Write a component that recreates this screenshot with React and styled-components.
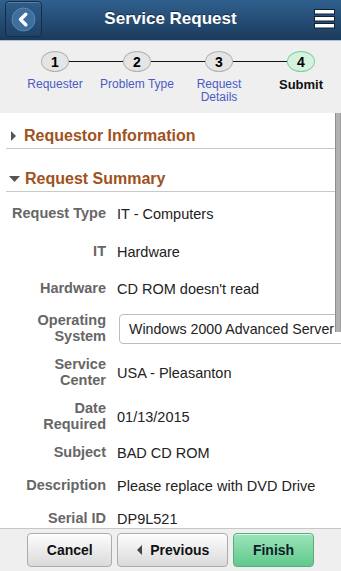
import React from 'react';
import styled, { createGlobalStyle } from 'styled-components';

const Global = createGlobalStyle`
  html, body { margin: 0; padding: 0; background: #fff; }
  body { font-family: "Liberation Sans", Arial, sans-serif; }
  * { box-sizing: border-box; }
`;

const Page = styled.div`
  width: 341px;
  height: 571px;
  display: flex;
  flex-direction: column;
  overflow: hidden;
`;

const Header = styled.header`
  flex: none;
  height: 41px;
  background: linear-gradient(#30608e, #1b3a5c);
  border-bottom: 1px solid #a7c2da;
  display: grid;
  grid-template-columns: 48px 1fr 48px;
  align-items: center;
`;

const BackButton = styled.button`
  align-self: start;
  margin: 1px 0 0 5px;
  width: 37px;
  height: 36px;
  padding: 0;
  border: 1px solid #142d48;
  border-radius: 4px;
  background: linear-gradient(#2f5c89, #1f4267);
  box-shadow: inset 0 1px 0 rgba(255, 255, 255, 0.22);
  display: flex;
  align-items: center;
  justify-content: center;
`;

const Title = styled.h1`
  margin: 0 0 2px;
  text-align: center;
  color: #fff;
  font-size: 17px;
  font-weight: bold;
  text-shadow: 0 -1px 0 rgba(0, 0, 0, 0.45);
`;

const MenuButton = styled.div`
  justify-self: end;
  margin: 0 5px 2px 0;
  display: flex;
`;

const Stepper = styled.nav`
  flex: none;
  height: 72px;
  background: #efefef;
  padding: 10px 0 0 14px;
  display: grid;
  grid-template-columns: repeat(4, 82px);
  align-items: start;
`;

const Step = styled.div`
  position: relative;
  display: flex;
  flex-direction: column;
  align-items: center;
  &:not(:last-child)::after {
    content: '';
    position: absolute;
    top: 10px;
    left: 50%;
    width: 82px;
    height: 1px;
    background: #111;
  }
`;

const Circle = styled.div`
  position: relative;
  z-index: 1;
  width: 28px;
  height: 21px;
  border-radius: 50%;
  border: 1px solid ${(p) => (p.$current ? '#7fcf9e' : '#b3b3b3')};
  background: ${(p) => (p.$current ? '#d6f2df' : '#e5e5e5')};
  display: flex;
  align-items: center;
  justify-content: center;
  font-size: 14px;
  font-weight: bold;
  color: #000;
`;

const StepLabel = styled.div`
  margin-top: 6px;
  text-align: center;
  line-height: 13px;
  font-size: ${(p) => (p.$current ? '13px' : '12px')};
  font-weight: ${(p) => (p.$current ? 'bold' : 'normal')};
  color: ${(p) => (p.$current ? '#111' : '#4a5bc4')};
`;

const Content = styled.main`
  flex: 1;
  position: relative;
  overflow: hidden;
  background: #fff;
`;

const ScrollThumb = styled.div`
  position: absolute;
  top: 0;
  right: 0;
  width: 6px;
  height: 219px;
  background: #b2b2b2;
  border-left: 1px solid #8f8f8f;
  border-right: 1px solid #a0a0a0;
`;

const SectionHeader = styled.h2`
  margin: ${(p) => p.$mt}px 0 0 6px;
  padding: ${(p) => p.$pt}px 0 3px;
  border-bottom: 1px solid #c9c9c9;
  display: flex;
  align-items: center;
  gap: ${(p) => p.$gap}px;
  color: #a0521c;
  font-size: 16px;
  line-height: 19px;
  font-weight: bold;
`;

const Caret = styled.svg`
  flex: none;
  margin-left: ${(p) => p.$ml}px;
  fill: #555;
`;

const Row = styled.div`
  margin-top: ${(p) => p.$mt}px;
  padding-left: 6px;
  display: grid;
  grid-template-columns: 100px minmax(0, 1fr);
  column-gap: 11px;
  align-items: center;
`;

const Label = styled.div`
  text-align: right;
  font-weight: bold;
  font-size: 14.5px;
  line-height: 15.5px;
  color: #666;
`;

const Value = styled.div`
  font-size: 14.5px;
  line-height: 16px;
  color: #222;
  white-space: nowrap;
`;

const SelectBox = styled.div`
  margin-left: 2px;
  width: 250px;
  height: 30px;
  border: 1px solid #bdbdbd;
  border-radius: 4px;
  background: #fff;
  padding-left: 9px;
  display: flex;
  align-items: center;
  font-size: 14.2px;
  color: #222;
  white-space: nowrap;
`;

const Footer = styled.footer`
  flex: none;
  height: 43px;
  border-top: 1px solid #c6c6c6;
  background: #efefef;
  padding-top: 4px;
  display: flex;
  justify-content: center;
  align-items: flex-start;
  gap: 5px;
`;

const Button = styled.button`
  height: 34px;
  padding: 0 ${(p) => p.$pr || 18.5}px 0 ${(p) => p.$pl || 18.5}px;
  border-radius: 4px;
  border: 1px solid ${(p) => (p.$primary ? '#55ae7c' : '#ababab')};
  background: ${(p) =>
    p.$primary
      ? 'linear-gradient(#9be5b9, #62c88c)'
      : 'linear-gradient(#fdfdfd, #dadada)'};
  box-shadow: inset 0 1px 0 rgba(255, 255, 255, 0.7);
  display: flex;
  align-items: center;
  gap: 8px;
  font-family: "Liberation Sans", Arial, sans-serif;
  font-size: 14px;
  font-weight: bold;
  color: ${(p) => (p.$primary ? '#0f1c2c' : '#111')};
`;

const steps = [
  { n: 1, label: 'Requester' },
  { n: 2, label: 'Problem Type' },
  { n: 3, label: 'Request Details' },
  { n: 4, label: 'Submit', current: true },
];

const rows = [
  { label: 'Request Type', value: 'IT - Computers', mt: 14 },
  { label: 'IT', value: 'Hardware', mt: 22 },
  { label: 'Hardware', value: "CD ROM doesn't read", mt: 21 },
  { label: ['Operating', 'System'], value: 'Windows 2000 Advanced Server', mt: 16, select: true },
  { label: ['Service', 'Center'], value: 'USA - Pleasanton', mt: 13 },
  { label: ['Date', 'Required'], value: '01/13/2015', mt: 13 },
  { label: 'Subject', value: 'BAD CD ROM', mt: 13 },
  { label: 'Description', value: 'Please replace with DVD Drive', mt: 17 },
  { label: 'Serial ID', value: 'DP9L521', mt: 17 },
];

export default function App() {
  return (
    <Page>
      <Global />
      <Header>
        <BackButton aria-label="Back">
          <svg width="25" height="25" viewBox="0 0 25 25">
            <circle cx="12.5" cy="12.5" r="11.5" fill="#3f6f9d" stroke="#5a87b2" strokeWidth="1" />
            <path d="M14.8 7.2 L9.5 12.5 L14.8 17.8" fill="none" stroke="#fff" strokeWidth="3.4" strokeLinecap="round" strokeLinejoin="round" />
          </svg>
        </BackButton>
        <Title>Service Request</Title>
        <MenuButton aria-label="Menu">
          <svg width="22" height="21" viewBox="0 0 22 21">
            <rect x="0.5" y="0.5" width="20" height="4.5" fill="#fff" stroke="#0e2135" />
            <rect x="0.5" y="7.5" width="20" height="4.5" fill="#fff" stroke="#0e2135" />
            <rect x="0.5" y="14.5" width="20" height="4.5" fill="#fff" stroke="#0e2135" />
          </svg>
        </MenuButton>
      </Header>

      <Stepper>
        {steps.map((s) => (
          <Step key={s.n}>
            <Circle $current={s.current}>{s.n}</Circle>
            <StepLabel $current={s.current}>{s.label}</StepLabel>
          </Step>
        ))}
      </Stepper>

      <Content>
        <SectionHeader $mt={0} $pt={13} $gap={8}>
          <Caret $ml={5} width="5" height="10" viewBox="0 0 5 10">
            <path d="M0 0 L5 5 L0 10 Z" />
          </Caret>
          Requestor Information
        </SectionHeader>
        <SectionHeader $mt={20} $pt={0} $gap={5}>
          <Caret $ml={3} width="11" height="6" viewBox="0 0 11 6">
            <path d="M0 0 L11 0 L5.5 6 Z" />
          </Caret>
          Request Summary
        </SectionHeader>

        {rows.map((r, i) => (
          <Row key={i} $mt={r.mt}>
            <Label>
              {Array.isArray(r.label)
                ? r.label.map((l, j) => <div key={j}>{l}</div>)
                : r.label}
            </Label>
            {r.select ? <SelectBox>{r.value}</SelectBox> : <Value>{r.value}</Value>}
          </Row>
        ))}

        <ScrollThumb />
      </Content>

      <Footer>
        <Button>Cancel</Button>
        <Button $pl={19} $pr={18}>
          <svg width="5" height="10" viewBox="0 0 5 10">
            <path d="M5 0 L0 5 L5 10 Z" fill="#444" />
          </svg>
          Previous
        </Button>
        <Button $primary>Finish</Button>
      </Footer>
    </Page>
  );
}
